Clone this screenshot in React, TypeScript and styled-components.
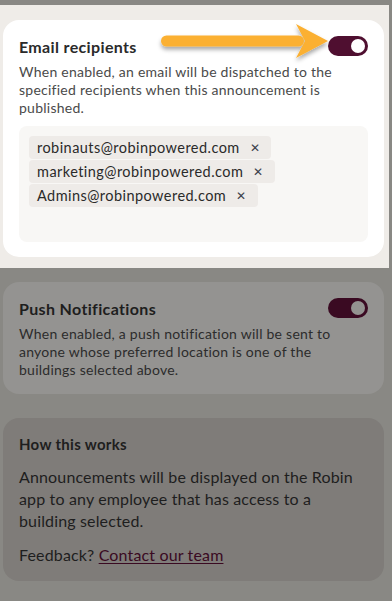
import React from "react";
import styled, { createGlobalStyle } from "styled-components";

const GlobalStyle = createGlobalStyle`
  html, body {
    margin: 0;
    padding: 0;
    background: #898884;
  }
  body {
    font-family: Lato, "Noto Sans", sans-serif;
    -webkit-font-smoothing: antialiased;
  }
  * {
    box-sizing: border-box;
  }
`;

const Page = styled.div`
  width: 392px;
  min-height: 601px;
  background: #898884;
  padding-top: 5px;
`;

// the highlighted area that the overlay leaves uncovered
const Spotlight = styled.section`
  width: 389px;
  background: #efece8;
  padding: 15px 5px 11px 3px;
`;

const Card = styled.div<{ $tone: "light" | "dim" | "dark" }>`
  position: relative;
  width: 381px;
  border-radius: 16px;
  padding: 16px 16px 15px;
  background: ${(p) =>
    p.$tone === "light" ? "#ffffff" : p.$tone === "dim" ? "#949391" : "#7f7c79"};
`;

const DimmedStack = styled.div`
  display: flex;
  flex-direction: column;
  gap: 24px;
  padding: 14px 8px 18px 3px;
`;

const HeaderRow = styled.div`
  display: flex;
  align-items: center;
  justify-content: space-between;
  height: 20px;
`;

const Title = styled.h3<{ $dim?: boolean }>`
  margin: 0;
  font-size: 16px;
  font-weight: 700;
  letter-spacing: 0.35px;
  color: ${(p) => (p.$dim ? "#1e1e1e" : "#2a2a2a")};
`;

const Description = styled.p<{ $dim?: boolean }>`
  margin: 7px 0 0;
  font-size: 14px;
  line-height: 18px;
  letter-spacing: 0.25px;
  color: ${(p) => (p.$dim ? "#2c2c2c" : "#4a4a4a")};
`;

const Toggle = styled.span<{ $dim?: boolean }>`
  display: flex;
  align-items: center;
  justify-content: flex-end;
  width: 40px;
  height: 20px;
  border-radius: 10px;
  padding: 0 3px;
  background: ${(p) => (p.$dim ? "#3a0a22" : "#4f0f30")};

  &::after {
    content: "";
    width: 14px;
    height: 14px;
    border-radius: 50%;
    background: ${(p) => (p.$dim ? "#949391" : "#ffffff")};
  }
`;

const RecipientBox = styled.div`
  margin-top: 9px;
  height: 116px;
  border-radius: 8px;
  background: #f8f7f5;
  padding: 10px;
  display: flex;
  flex-direction: column;
  align-items: flex-start;
  gap: 1px;
`;

const Chip = styled.span`
  display: inline-flex;
  align-items: center;
  gap: 10px;
  height: 23px;
  padding: 0 11px 0 8px;
  border-radius: 4px;
  background: #eeebe8;
  font-size: 14.5px;
  letter-spacing: 0.45px;
  color: #2a2a2a;
`;

const ChipRemove = styled.span`
  font-size: 12px;
  color: #3a3f4a;
  line-height: 1;
`;

const InfoTitle = styled.h4`
  margin: 0;
  font-size: 15px;
  line-height: 20px;
  font-weight: 700;
  letter-spacing: 0.3px;
  color: #1e1e1e;
`;

const InfoText = styled.p`
  margin: 12px 0 0;
  font-size: 16px;
  line-height: 22px;
  letter-spacing: 0.15px;
  color: #1e1e1e;
`;

const Link = styled.a`
  color: #3a0a22;
  text-decoration: underline;
  text-underline-offset: 2px;
`;

const Pointer = styled.svg`
  position: absolute;
  left: 147px;
  top: 0;
  overflow: visible;
`;

const recipients = [
  "robinauts@robinpowered.com",
  "marketing@robinpowered.com",
  "Admins@robinpowered.com",
];

export default function App() {
  return (
    <Page>
      <GlobalStyle />
      <Spotlight>
        <Card $tone="light">
          <HeaderRow>
            <Title>Email recipients</Title>
            <Toggle />
          </HeaderRow>
          <Description>
            When enabled, an email will be dispatched to the specified recipients when this
            announcement is published.
          </Description>
          <RecipientBox>
            {recipients.map((r) => (
              <Chip key={r}>
                {r}
                <ChipRemove>✕</ChipRemove>
              </Chip>
            ))}
          </RecipientBox>
          <Pointer width="185" height="45" viewBox="0 0 185 45">
            <defs>
              <filter id="shadow" x="-10%" y="-30%" width="120%" height="180%">
                <feDropShadow dx="0" dy="3" stdDeviation="2" floodColor="#000" floodOpacity="0.35" />
              </filter>
            </defs>
            <g filter="url(#shadow)" fill="#fbb031">
              <rect x="11" y="15.5" width="143" height="11" rx="5.5" />
              <polygon points="146,4 178,21 146,38 155,21" />
            </g>
          </Pointer>
        </Card>
      </Spotlight>
      <DimmedStack>
        <Card $tone="dim">
          <HeaderRow>
            <Title $dim>Push Notifications</Title>
            <Toggle $dim />
          </HeaderRow>
          <Description $dim>
            When enabled, a push notification will be sent to anyone whose preferred location
            is one of the buildings selected above.
          </Description>
        </Card>
        <Card $tone="dark">
          <InfoTitle>How this works</InfoTitle>
          <InfoText>
            Announcements will be displayed on the Robin app to any employee that has access
            to a building selected.
          </InfoText>
          <InfoText>
            Feedback? <Link href="#">Contact our team</Link>
          </InfoText>
        </Card>
      </DimmedStack>
    </Page>
  );
}
